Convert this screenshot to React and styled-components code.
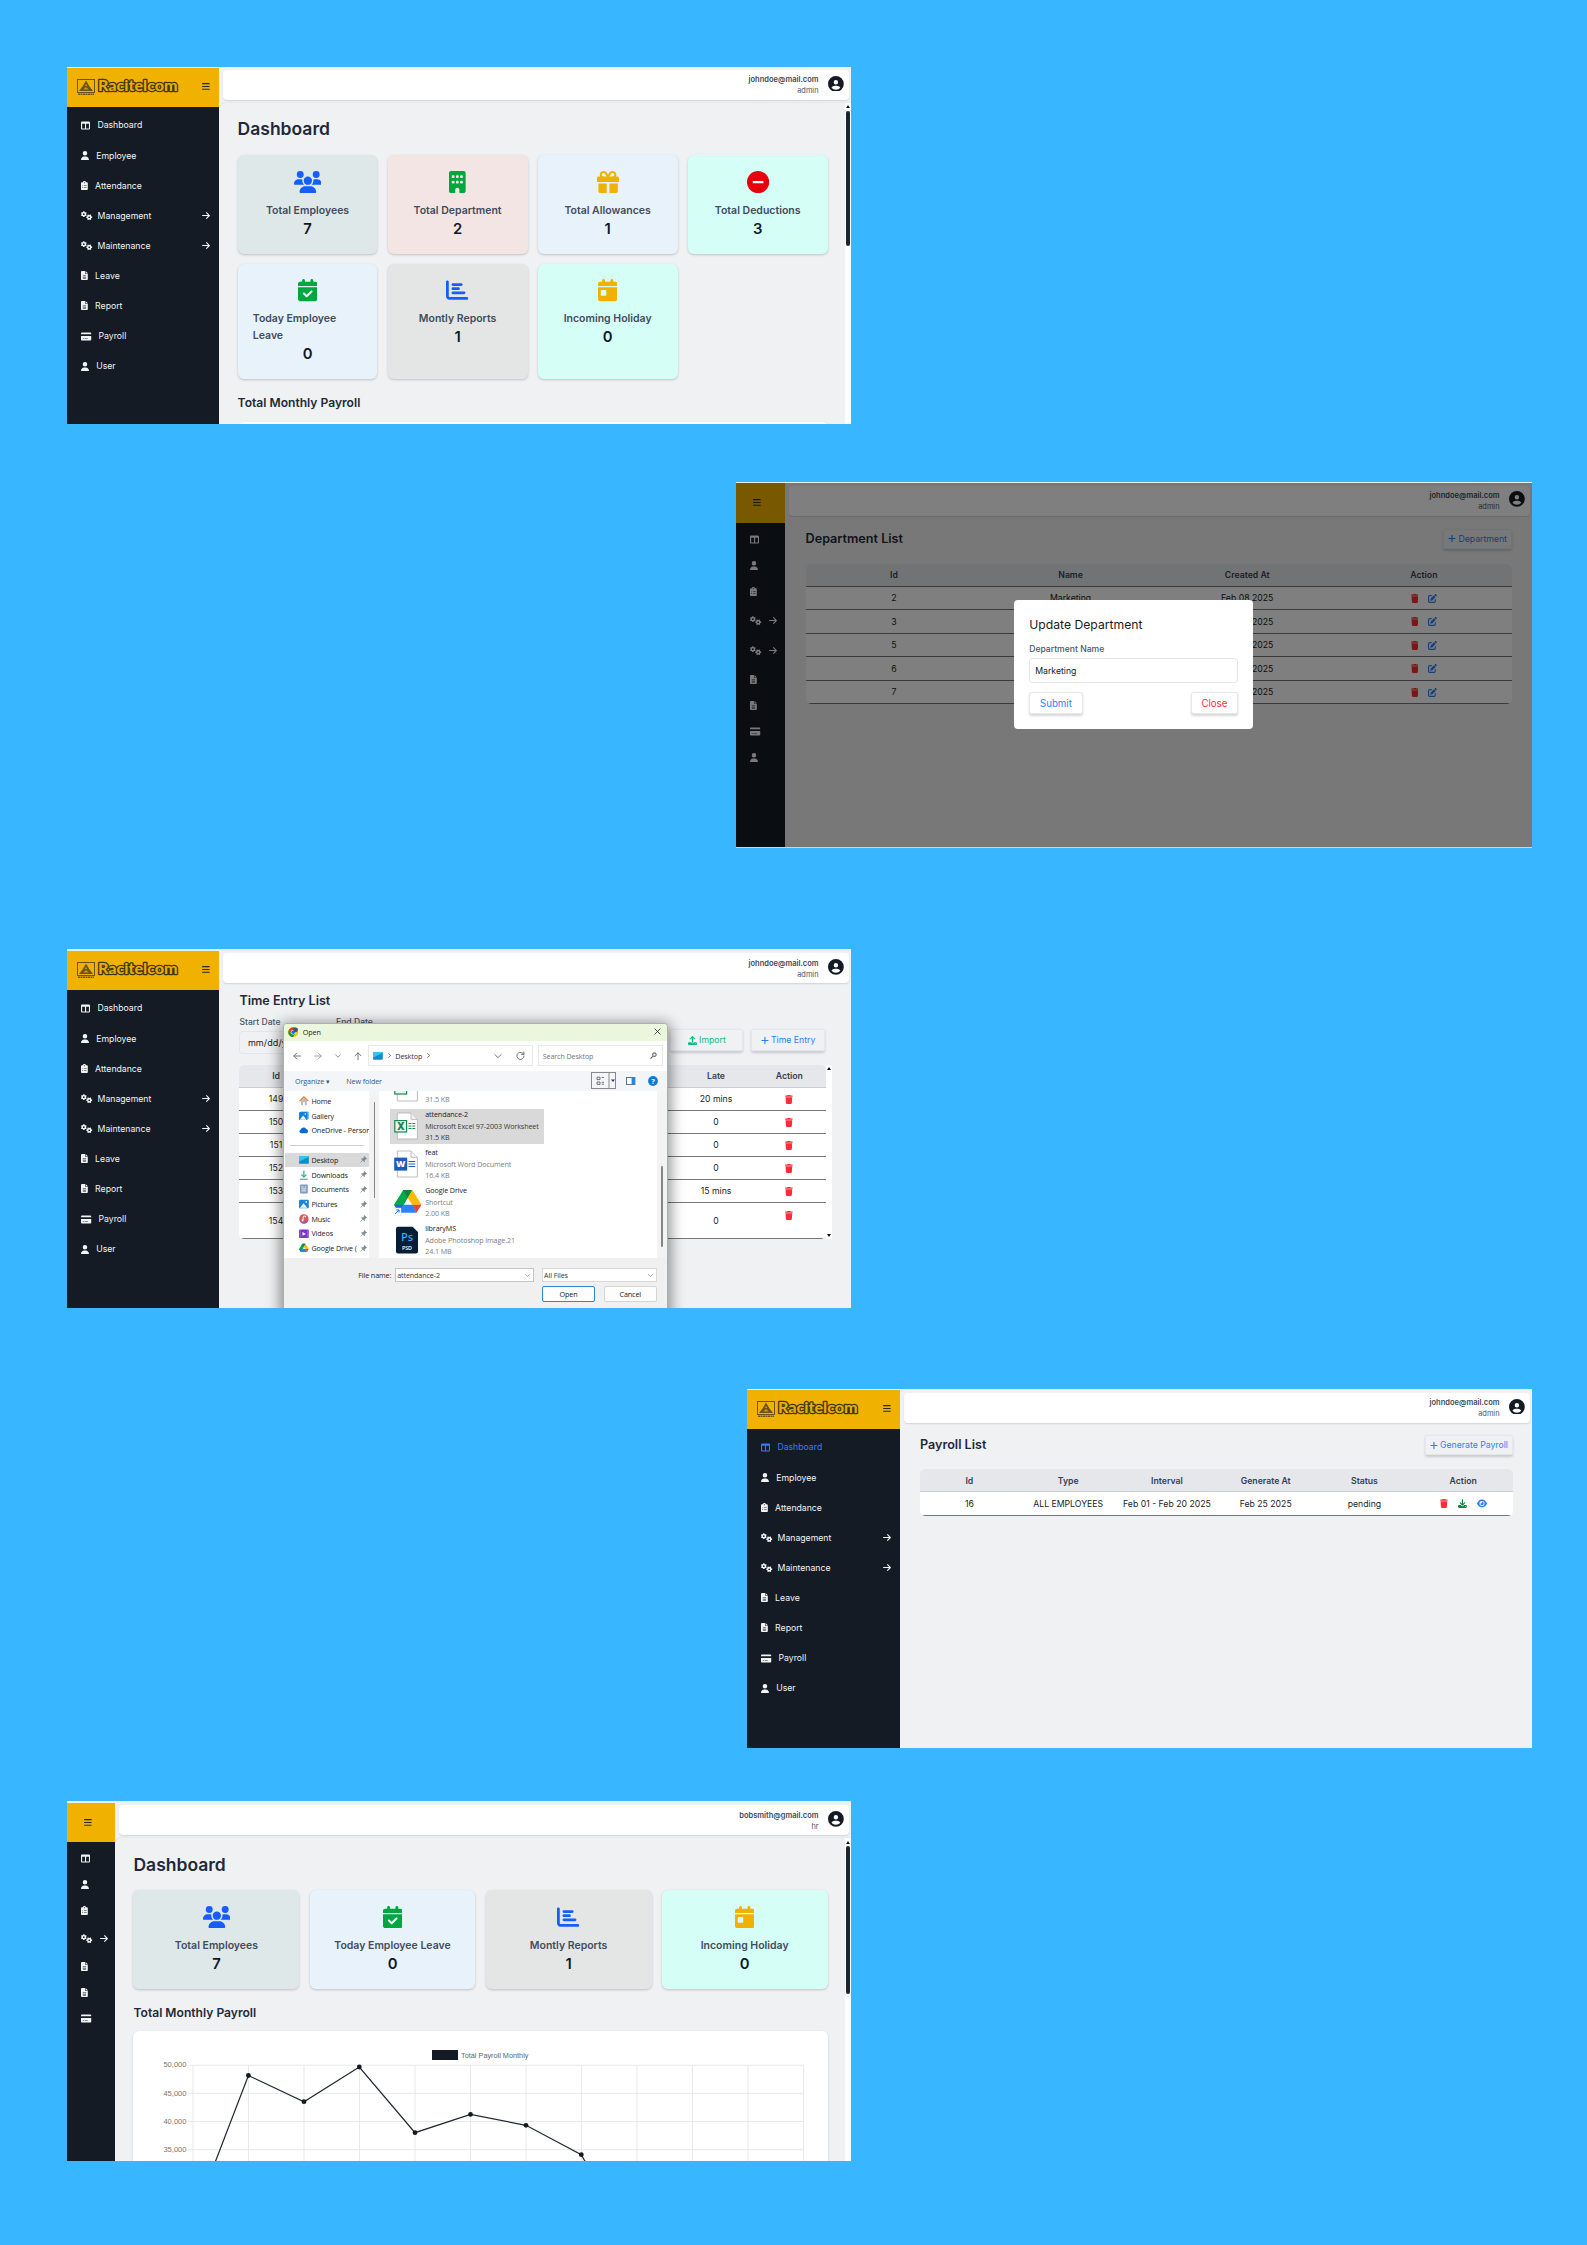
import React from "react";
import styled, { createGlobalStyle, css } from "styled-components";
import * as Fa from "react-icons/fa6";

/* Font Awesome glyphs are 512 units high and vary in width */
const glyph = (Icon, width) => styled(Icon)`aspect-ratio: ${width} / 512;`;
const FaTableColumns = glyph(Fa.FaTableColumns, 512);
const FaUser = glyph(Fa.FaUser, 448);
const FaClipboardList = glyph(Fa.FaClipboardList, 384);
const FaGears = glyph(Fa.FaGears, 640);
const FaFileLines = glyph(Fa.FaFileLines, 384);
const FaCreditCard = glyph(Fa.FaCreditCard, 576);
const FaArrowRight = glyph(Fa.FaArrowRight, 448);
const FaBars = glyph(Fa.FaBars, 448);
const FaUsers = glyph(Fa.FaUsers, 640);
const FaBuilding = glyph(Fa.FaBuilding, 384);
const FaGift = glyph(Fa.FaGift, 512);
const FaCalendarCheck = glyph(Fa.FaCalendarCheck, 448);
const FaChartBar = glyph(Fa.FaChartBar, 512);
const FaCalendarDay = glyph(Fa.FaCalendarDay, 448);
const FaCircleUser = glyph(Fa.FaCircleUser, 512);
const FaTrash = glyph(Fa.FaTrash, 448);
const FaPenToSquare = glyph(Fa.FaPenToSquare, 512);
const FaDownload = glyph(Fa.FaDownload, 512);
const FaUpload = glyph(Fa.FaUpload, 512);
const FaEye = glyph(Fa.FaEye, 576);
const FaPlus = glyph(Fa.FaPlus, 448);
const MinusDisc = () => (
  <svg width="22" height="22" viewBox="0 0 22 22">
    <circle cx="11" cy="11" r="11" fill="currentColor" />
    <rect x="5.7" y="9.8" width="10.6" height="2.4" rx="0.6" fill="#fff" />
  </svg>
);

const GlobalStyle = createGlobalStyle`
  *, *::before, *::after { box-sizing: border-box; }
  body { margin: 0; background: #38b6ff; font-family: Inter, "Liberation Sans", sans-serif; }
  svg { display: block; flex: none; }
`;

const Board = styled.main`
  width: 1587px;
  height: 2245px;
  padding: 67px 55px 0 67px;
  display: flex;
  flex-direction: column;
  align-items: flex-start;
  background: #38b6ff;
  overflow: hidden;
`;

const Screen = styled.section`
  position: relative;
  flex: none;
  width: ${(p) => p.$w}px;
  height: ${(p) => p.$h}px;
  margin-top: ${(p) => p.$gap || 0}px;
  align-self: ${(p) => (p.$right ? "flex-end" : "flex-start")};
  border-top: ${(p) => p.$strip}px solid #e9eff3;
  background: #f0f1f3;
  overflow: hidden;
  display: flex;
`;

/* ---------- sidebar ---------- */
const Side = styled.aside`
  width: ${(p) => p.$w}px;
  flex: none;
  background: #151b24;
  color: #f3f4f6;
`;
const Brand = styled.header`
  height: ${(p) => p.$h || 39}px;
  background: #f0b100;
  color: #2b2a17;
  display: flex;
  align-items: center;
  justify-content: ${(p) => (p.$mini ? "flex-start" : "space-between")};
  padding: ${(p) => (p.$mini ? "0 0 1px 17px" : "0 9.3px 1.2px 10px")};
  & > svg:last-child { height: 8.9px; width: auto; }
`;
const Nav = styled.nav`
  padding-top: 3.4px;
  display: flex;
  flex-direction: column;
`;
const NavItem = styled.a`
  height: ${(p) => p.$h}px;
  padding: 0 9px 0 14.3px;
  display: flex;
  align-items: center;
  gap: ${(p) => (p.$tight ? 4.9 : 7)}px;
  font-size: 8.7px;
  color: ${(p) => (p.$active ? "#2b7fff" : "inherit")};
  & > svg { height: 9.1px; width: auto; }
  & > svg:last-child:not(:first-child) { margin-left: ${(p) => (p.$mini ? "2.6px" : "auto")}; }
`;

const LINKS = [
  ["Dashboard", FaTableColumns], ["Employee", FaUser], ["Attendance", FaClipboardList],
  ["Management", FaGears, true], ["Maintenance", FaGears, true], ["Leave", FaFileLines],
  ["Report", FaFileLines], ["Payroll", FaCreditCard], ["User", FaUser],
];
const HR_LINKS = LINKS.filter(([name]) => name !== "Maintenance" && name !== "User");

function Logo() {
  return (
    <svg width="104" height="18" viewBox="0 0 104 18">
      <g fill="none" stroke="#6e5318" strokeWidth="1">
        <rect x="0.5" y="1.5" width="17" height="13" />
        <path d="M1 16.2h16" strokeWidth="1.4" strokeDasharray="2 .5" />
      </g>
      <path d="M9 2.4 12.2 8 16 13H2L5.8 8Z" fill="#6e5318" />
      <path d="M9 6 10.2 8H7.8ZM9 9l2.6 2.6H6.4Z" fill="#d09a0a" />
      <text x="21" y="13.4" textLength="79.6" lengthAdjust="spacingAndGlyphs" fontFamily="Lato, sans-serif"
        fontWeight="900" fontSize="14.6" fill="#e8ac05" stroke="#3d370d" strokeWidth="2.4" paintOrder="stroke"
        strokeLinejoin="round">Racitelcom</text>
    </svg>
  );
}

function Sidebar({ mini, width, brandHeight, links = LINKS, row = 30.1, wideRow = 30.1, active }) {
  return (
    <Side $w={width}>
      <Brand $mini={mini} $h={brandHeight}>
        {!mini && <Logo />}
        <FaBars />
      </Brand>
      <Nav>
        {links.map(([name, Icon, more]) => (
          <NavItem key={name} $h={more ? wideRow : row} $tight={more} $mini={mini} $active={active === name}>
            <Icon />
            {!mini && name}
            {more && <FaArrowRight />}
          </NavItem>
        ))}
      </Nav>
    </Side>
  );
}

/* ---------- main column ---------- */
const Main = styled.div`
  flex: 1;
  min-width: 0;
  display: flex;
  flex-direction: column;
`;
const TopBar = styled.header`
  flex: none;
  height: 30px;
  margin: ${(p) => p.$mt || 2.3}px 1.7px 0 3.6px;
  padding: 0 5.4px 0 0;
  display: flex;
  justify-content: flex-end;
  align-items: flex-start;
  gap: 9.6px;
  background: #fff;
  border-radius: 4px;
  box-shadow: 0 1px 1.5px rgba(0, 0, 0, 0.12);
  & > svg { width: 15.8px; height: 15.8px; color: #141a23; margin-top: 5.6px; }
`;
const Account = styled.div`
  text-align: right;
  font-size: 7.4px;
  line-height: 11px;
  color: #4a5565;
  padding-top: 4.4px;
  & > strong { display: block; font-weight: 600; font-size: 7.5px; color: #3d4757; }
`;
function Top({ mail = "johndoe@mail.com", role = "admin", mt }) {
  return (
    <TopBar $mt={mt}>
      <Account><strong>{mail}</strong>{role}</Account>
      <FaCircleUser />
    </TopBar>
  );
}

const Scroller = styled.div`
  margin-top: 3px;
  flex: 1;
  min-height: 0;
  display: flex;
  overflow: hidden;
  border-top-left-radius: 6px;
  box-shadow: 0 0 1.5px rgba(0, 0, 0, 0.14);
`;
const Page = styled.div`
  flex: 1;
  min-width: 0;
  padding: 14.3px 17.4px 0 18.3px;
`;
const Track = styled.div`
  width: 6px;
  flex: none;
  background: #fff;
  display: flex;
  flex-direction: column;
  align-items: center;
  justify-content: ${(p) => (p.$ends ? "space-between" : "flex-start")};
  padding: 2.4px 0;
`;
const Caret = styled.i`
  border: 2px solid transparent;
  border-top-width: ${(p) => (p.$down ? 3 : 0)}px;
  border-bottom-width: ${(p) => (p.$down ? 0 : 3)}px;
  border-top-color: ${(p) => (p.$down ? "#111" : "transparent")};
  border-bottom-color: ${(p) => (p.$down ? "transparent" : "#111")};
`;
const Thumb = styled.i`
  width: 4px;
  height: ${(p) => p.$h}px;
  margin-top: 2.6px;
  border-radius: 2px;
  background: #1c2430;
`;

const Heading = styled.h1`
  margin: 0 0 13.8px;
  font-size: 17.5px;
  line-height: 24px;
  font-weight: 600;
  color: #1e2939;
`;
const SubHeading = styled.h2`
  margin: 15.4px 0 10.8px;
  font-size: 12.1px;
  line-height: 16px;
  font-weight: 600;
  color: #1e2939;
`;
const Cards = styled.div`
  display: grid;
  grid-template-columns: repeat(4, 1fr);
  gap: 9.7px 10.2px;
`;
const Card = styled.article`
  min-height: 98.8px;
  padding: 15.8px 15.2px 15px;
  display: flex;
  flex-direction: column;
  align-items: center;
  border-radius: 6px;
  background: ${(p) => p.$bg};
  box-shadow: 0 1px 2.5px rgba(0, 0, 0, 0.2);
  & > svg { height: 22.2px; width: auto; color: ${(p) => p.$fg}; }
`;
const CardLabel = styled.div`
  margin-top: 8.8px;
  font-size: 10.5px;
  line-height: 17px;
  font-weight: 600;
  color: #414c5c;
`;
const CardValue = styled.strong`
  font-size: 14.8px;
  line-height: 20px;
  font-weight: 600;
  color: #101828;
`;
const BLUE = "#155dfc", GREEN = "#00a63e", AMBER = "#f0b100", RED = "#e7000b";
const STATS = {
  employees: ["Total Employees", 7, FaUsers, "#dfe8e8", BLUE],
  department: ["Total Department", 2, FaBuilding, "#f3e5e3", GREEN],
  allowances: ["Total Allowances", 1, FaGift, "#e7f2fb", AMBER],
  deductions: ["Total Deductions", 3, MinusDisc, "#d5fef6", RED],
  leave: ["Today Employee Leave", 0, FaCalendarCheck, "#e7f2fb", GREEN],
  reports: ["Montly Reports", 1, FaChartBar, "#e4e6e5", BLUE],
  holiday: ["Incoming Holiday", 0, FaCalendarDay, "#d5fef6", AMBER],
};
function StatCards({ keys }) {
  return (
    <Cards>
      {keys.map((k) => {
        const [label, value, Icon, bg, fg] = STATS[k];
        return (
          <Card key={k} $bg={bg} $fg={fg}>
            <Icon />
            <CardLabel>{label}</CardLabel>
            <CardValue>{value}</CardValue>
          </Card>
        );
      })}
    </Cards>
  );
}

/* ---------- chart ---------- */
const ChartCard = styled.div`
  height: 200px;
  padding: 18.8px 0 0 28px;
  border-radius: 6px;
  background: #fff;
  box-shadow: 0 1px 2.5px rgba(0, 0, 0, 0.16);
`;
const Legend = styled.div`
  display: flex;
  align-items: center;
  justify-content: center;
  gap: 3.4px;
  margin-left: -29px;
  height: 10px;
  font: 7.3px "Liberation Sans", sans-serif;
  color: #666;
  &::before { content: ""; width: 26px; height: 9.5px; background: #141a23; }
`;
const POINTS = [[0, 155], [55.4, 10.5], [111, 36.7], [166.3, 2], [222, 67.7], [277.5, 49.4], [333, 60.3], [388.3, 89.7], [444, 190]];
function PayrollChart() {
  return (
    <ChartCard>
      <Legend>Total Payroll Monthly</Legend>
      <svg width="660" height="140" viewBox="-32 -5 660 140">
        <g stroke="#e6e6e6" strokeWidth="0.9">
          {[0, 1, 2, 3, 4].map((i) => <path key={i} d={`M-5 ${i * 28.15 + 0.2}H610.5`} />)}
          {Array.from({ length: 12 }, (_, i) => <path key={i} d={`M${i * 55.5} 0V130`} />)}
        </g>
        <g fontFamily='"Liberation Sans", sans-serif' fontSize="7.5" fill="#747474" textAnchor="end">
          {["50,000", "45,000", "40,000", "35,000"].map((t, i) => <text key={t} x="-6.6" y={i * 28.15 + 2.4}>{t}</text>)}
        </g>
        <polyline points={POINTS.map((p) => p.join()).join(" ")} fill="none" stroke="#222932" strokeWidth="1.25" />
        {POINTS.map(([x, y]) => <circle key={x} cx={x} cy={y} r="2.4" fill="#141a23" />)}
      </svg>
    </ChartCard>
  );
}

/* ---------- list pages ---------- */
const ListPage = styled.div`
  flex: 1;
  padding: ${(p) => p.$pad};
`;
const ListHead = styled.div`
  display: flex;
  justify-content: space-between;
  align-items: center;
  margin-bottom: ${(p) => p.$mb}px;
`;
const ListTitle = styled.h2`
  margin: 0;
  font-size: 12.6px;
  line-height: 16px;
  font-weight: 600;
  color: #1e2939;
`;
const TONES = { blue: "#2b7fff", green: "#10b981", red: "#fb2c36" };
const Button = styled.button`
  height: ${(p) => p.$h || 19.6}px;
  width: ${(p) => (p.$w ? p.$w + "px" : "auto")};
  padding: 0 5px;
  display: flex;
  align-items: center;
  justify-content: center;
  gap: 2.4px;
  font: 400 ${(p) => p.$size || 8.7}px Inter, sans-serif;
  white-space: nowrap;
  color: ${(p) => TONES[p.$tone || "blue"]};
  background: ${(p) => (p.$solid ? "#fff" : "transparent")};
  border: 1px solid #e5e7eb;
  border-radius: 2.5px;
  box-shadow: 0 1.5px 2.5px rgba(0, 0, 0, 0.16);
  & > svg { height: 9px; width: auto; }
`;
const Table = styled.div`
  flex: 1;
  border-radius: 5px;
  overflow: hidden;
  background: #fff;
  font-size: 8.7px;
  color: #1c1c1c;
`;
const Row = styled.div`
  display: grid;
  grid-template-columns: repeat(${(p) => p.$cols}, 1fr);
  align-items: center;
  height: ${(p) => p.$h || 23.55}px;
  padding-top: 0.8px;
  text-align: center;
  white-space: nowrap;
  border-bottom: 1px solid #777;
  ${(p) => p.$head && css`
    background: #e5e7eb;
    color: #364153;
    font-weight: 600;
    border-bottom: 1.5px solid ${p.$line || "#c8ccd3"};
  `}
`;
const Actions = styled.div`
  display: flex;
  justify-content: center;
  align-items: center;
  gap: 10px;
  margin-bottom: ${(p) => p.$lift || 0}px;
  & > svg { height: 8.9px; width: auto; }
`;

/* ---------- modal ---------- */
const Overlay = styled.div`
  position: absolute;
  inset: -1px 0 0 0;
  background: rgba(0, 0, 0, 0.5);
  border-bottom: 1.5px solid #d9d4cf;
`;
const Modal = styled.div`
  position: absolute;
  left: 278.2px;
  top: 117px;
  width: 239px;
  height: 129px;
  padding: 16.8px 15px 0;
  border-radius: 4px;
  background: #fff;
`;
const ModalTitle = styled.h3`
  margin: 0;
  font-size: 12.2px;
  line-height: 16px;
  font-weight: 400;
  color: #1a1a1a;
`;
const FieldLabel = styled.label`
  display: block;
  margin-top: ${(p) => p.$mt || 0}px;
  font-size: 8.6px;
  line-height: 11px;
  font-weight: 500;
  color: #4a5565;
`;
const Input = styled.div`
  margin-top: 3.2px;
  width: ${(p) => (p.$w ? p.$w + "px" : "auto")};
  height: ${(p) => p.$h || 24.5}px;
  padding: 0 ${(p) => p.$pad || 5}px;
  display: flex;
  align-items: center;
  white-space: nowrap;
  font-size: ${(p) => p.$size || 8.7}px;
  color: #1a1a1a;
  border: 1px solid #e2e5ea;
  border-radius: 3.5px;
  letter-spacing: ${(p) => p.$track || 0}px;
`;
const ModalFoot = styled.div`
  margin-top: 9.5px;
  display: flex;
  justify-content: space-between;
`;

/* ---------- time entry filters ---------- */
const Filters = styled.div`
  display: flex;
  align-items: flex-end;
  gap: 8px;
  margin: 8.2px 7.3px 11.4px 0;
`;
const Field = styled.div`
  width: ${(p) => p.$w}px;
  margin-right: ${(p) => (p.$last ? "auto" : 0)};
`;
const FilterButton = styled(Button)`margin-bottom: 2.3px;`;
const TableWrap = styled.div`display: flex;`;

/* ---------- file dialog ---------- */
const Dialog = styled.div`
  position: absolute;
  left: 216px;
  top: 71.8px;
  width: 385px;
  height: 300px;
  display: flex;
  flex-direction: column;
  border: 1px solid #aab0ab;
  border-radius: 4px 4px 0 0;
  background: #f0f0f0;
  box-shadow: 0 3px 14px 3px rgba(0, 0, 0, 0.42);
  overflow: hidden;
  font-family: "Open Sans", "Noto Sans", sans-serif;
  font-size: 7.2px;
  letter-spacing: -0.12px;
  color: #222;
`;
const DialogTitle = styled.div`
  flex: none;
  height: 17px;
  padding: 0 6px 1px 4.4px;
  display: flex;
  align-items: center;
  gap: 4px;
  background: #ebf7dc;
  & > svg:last-child { margin-left: auto; }
`;
const AddressRow = styled.div`
  flex: none;
  height: 30px;
  padding: 0 4px 0 8.8px;
  display: flex;
  align-items: center;
  background: #fff;
`;
const Arrows = styled.div`
  width: 75.5px;
  display: flex;
  align-items: center;
  gap: 13.2px;
`;
const Box = styled.div`
  width: ${(p) => p.$w}px;
  height: ${(p) => p.$h || 21}px;
  margin-left: ${(p) => p.$ml || 0}px;
  padding: 0 ${(p) => p.$pr || 4}px 0 ${(p) => p.$pl || 4}px;
  display: flex;
  align-items: center;
  gap: ${(p) => p.$gap || 4}px;
  color: ${(p) => (p.$muted ? "#767676" : "#333")};
  background: #fff;
  border: 1px solid ${(p) => p.$line || "#e8e8e8"};
  & > svg:last-child { margin-left: ${(p) => (p.$push ? "auto" : "0")}; }
`;
const BoxTools = styled.span`
  margin-left: auto;
  display: flex;
  align-items: center;
  gap: 14.6px;
`;
const ToolRow = styled.div`
  flex: none;
  height: 20.5px;
  padding: 0 8.8px 0.6px 11px;
  display: flex;
  align-items: center;
  background: #f3f5f8;
  color: #3d5876;
  & > span { margin-right: 16.6px; }
`;
const ViewButton = styled.div`
  margin: 0 9.6px 0 auto;
  width: 25.6px;
  height: 17px;
  display: flex;
  align-items: center;
  border: 1px solid #888;
`;
const DialogBody = styled.div`
  flex: none;
  height: 166.6px;
  display: flex;
`;
const Tree = styled.div`
  width: 85px;
  flex: none;
  padding: 2.2px 0 0 1px;
  background: #fff;
`;
const TreeItem = styled.div`
  height: 14.73px;
  padding: 0 ${(p) => (p.$wide ? 0 : 2)}px 0 14.2px;
  display: flex;
  align-items: center;
  gap: 2.4px;
  white-space: nowrap;
  background: ${(p) => (p.$on ? "#d9d9d9" : "transparent")};
  & > span { flex: 1; min-width: 0; overflow: hidden; }
`;
const TreeRule = styled.hr`
  margin: 6.9px 5px 7px 5px;
  border: 0;
  border-top: 1px solid #cfcfcf;
`;
const Gutter = styled.div`
  width: 10px;
  flex: none;
  padding: ${(p) => p.$top}px 0 0 ${(p) => p.$left}px;
  background: #f3f3f3;
  &::before { content: ""; display: block; width: 1.8px; height: ${(p) => p.$h}px; border-radius: 1px; background: #858585; }
`;
const Files = styled.div`
  flex: 1;
  min-width: 0;
  padding-left: 10.9px;
  background: #fff;
  overflow: hidden;
  display: flex;
  flex-direction: column;
  justify-content: flex-end;
  align-items: flex-start;
  gap: 2.7px;
`;
const File = styled.div`
  flex: none;
  width: 154px;
  height: 35.3px;
  padding-left: 4px;
  display: flex;
  align-items: center;
  gap: 4.3px;
  line-height: 11.2px;
  white-space: nowrap;
  background: ${(p) => (p.$on ? "#d9d9d9" : "transparent")};
  color: ${(p) => (p.$on ? "#3a3a3a" : "#808080")};
  & b { display: block; font-weight: 400; color: #222; }
`;
const LastLine = styled.div`
  align-self: flex-end;
  padding-bottom: 0.9px;
`;
const DialogFoot = styled.div`
  padding: 10.6px 10px 0 0;
  display: flex;
  align-items: center;
  justify-content: flex-end;
`;
const FootButtons = styled.div`
  display: flex;
  justify-content: flex-end;
  gap: 8.4px;
  padding: 3.8px 10px 0 0;
`;
const DialogButton = styled.button`
  width: 53.4px;
  height: 15.7px;
  padding: 0;
  font: inherit;
  letter-spacing: inherit;
  color: #222;
  background: #fdfdfd;
  border: 1px solid ${(p) => (p.$primary ? "#2f86cf" : "#d4d4d4")};
  border-radius: 2px;
`;

const Stroke = ({ d, w = 8, c = "#666", sw = 0.9 }) => (
  <svg width={w} height={w} viewBox="0 0 8 8"><path d={d} fill="none" stroke={c} strokeWidth={sw} strokeLinecap="round" strokeLinejoin="round" /></svg>
);
const Chev = () => <Stroke w={5} d="M2.5 1 6 4 2.5 7" sw={1.3} />;
const Down = ({ w = 7 }) => <Stroke w={w} d="M.8 2.5 4 5.6 7.2 2.5" />;
const Pin = () => (
  <svg width="7" height="7" viewBox="0 0 8 8"><path d="M5 .5 7.5 3l-1 .3L5 5l0 1.5L1.7 3.2h1.5L4.8 1.6ZM3.3 4.7.6 7.4" fill="#7d8992" stroke="#7d8992" strokeWidth=".8" /></svg>
);
const DriveMark = ({ size, x = 0, y = 0 }) => (
  <svg x={x} y={y} width={size} height={size} viewBox="0 0 24 24">
    <path d="M8 2h8l-4 7-7.4 13L0 15Z" fill="#00a94b" />
    <path d="M8 2h8l-4 7Z" fill="#11833a" />
    <path d="M16 2 24 15h-8l-4-6Z" fill="#ffba00" />
    <path d="M4.6 22 8.3 15h8l3.4 7Z" fill="#2684fc" />
    <path d="M16 15h8l-4.4 7Z" fill="#ea4335" />
    <path d="M4.6 22 0 15l8.3 0Z" fill="#1a6de0" />
  </svg>
);
const TREE_ICONS = {
  Home: <><path d="M2 4.6V9.5H4V6.4H6V9.5H8V4.6L5 2Z" fill="#b9bec4" /><path d="M.5 5.2 5 1 9.5 5.2" fill="none" stroke="#ec7a24" strokeWidth="1.3" /></>,
  Gallery: <><rect x="1.5" y=".5" width="8.5" height="8" rx="1" fill="#5db6ee" /><rect y="1" width="8.5" height="8.5" rx="1" fill="#1480d8" /><path d="M.8 9 4.2 4.5 7.6 9Z" fill="#fff" /><circle cx="6.4" cy="3" r=".8" fill="#fff" /></>,
  OneDrive: <path d="M2 8.4A2 2 0 0 1 1.8 4.6 3.2 3.2 0 0 1 7.4 4a2.3 2.3 0 0 1 .4 4.4Z" fill="#0a6cd0" />,
  Desktop: <><rect y="1" width="10" height="8" rx=".8" fill="#0c8ecb" /><path d="M0 7V1.8Q0 1 .8 1H9.2Q10 1 10 1.8Z" fill="#35c5e6" /></>,
  Downloads: <path d="M5 .5V7M2.4 4.6 5 7.2 7.6 4.6M1 9.4h8" fill="none" stroke="#1fa58c" strokeWidth="1.1" />,
  Documents: <><rect x="1" y=".4" width="8" height="9.2" rx=".8" fill="#7e9cbf" /><path d="M2.4 3h2.2M2.4 5h5M2.4 7h5M5.8 3h1.6" stroke="#fff" strokeWidth=".9" /></>,
  Pictures: <><rect y=".7" width="10" height="8.8" rx="1" fill="#1785dc" /><path d="M1 9 4.6 4.4 8.4 9Z" fill="#fff" /><circle cx="7.4" cy="3" r=".9" fill="#fff" /></>,
  Music: <><circle cx="5" cy="5" r="4.8" fill="#d0605e" /><path d="M.6 7A4.8 4.8 0 0 0 9.6 6.4Z" fill="#a65a9a" /><path d="M4.2 6.6V2.6L6.6 2v1.4" fill="none" stroke="#fff" strokeWidth=".9" /><circle cx="3.6" cy="6.6" r="1" fill="#fff" /></>,
  Videos: <><rect y=".6" width="10" height="9" rx="1" fill="#7a35c8" /><path d="M3.6 3v4L7 5Z" fill="#fff" /><path d="M1.1 1.6V9M8.9 1.6V9" stroke="#d9bdf7" strokeWidth=".8" strokeDasharray="1 1" /></>,
  "Google Drive (": <DriveMark size={10} />,
};
const TreeIcon = ({ name }) => <svg width="9.8" height="9.8" viewBox="0 0 10 10">{TREE_ICONS[name]}</svg>;

const Sheet = ({ color, letter, excel }) => (
  <svg width="27" height="28" viewBox="0 0 27 28">
    <path d="M3.3 1H17l6.4 6.4V27H3.3Z" fill="#fff" stroke="#b5b5b5" strokeWidth=".9" />
    <path d="M17 1v6.4h6.4" fill="#f2f2f2" stroke="#b5b5b5" strokeWidth=".8" />
    <path d="M14.5 11.5h6.8M14.5 14h6.8M14.5 16.5h6.8" stroke={color} strokeWidth="1" strokeDasharray={excel ? "3 .8" : "none"} />
    {excel
      ? <rect x=".8" y="8.6" width="11.8" height="11.4" fill="#e9f5ee" stroke={color} strokeWidth="1.2" />
      : <rect x=".2" y="7.6" width="13" height="13" fill={color} />}
    {letter && (
      <text x="6.7" y={excel ? 17.8 : 17.4} fontSize={excel ? 10 : 9} fontWeight="800" textAnchor="middle"
        fill={excel ? color : "#fff"} fontFamily="Open Sans, sans-serif">{letter}</text>
    )}
  </svg>
);
const DriveFile = () => (
  <svg width="27" height="28" viewBox="0 0 27 28">
    <DriveMark size={27.5} y={-0.4} />
    <rect x="-1" y="20" width="8" height="8" fill="#fff" stroke="#b9cde0" strokeWidth=".5" />
    <path d="M1 26 5 22M2.4 22H5v2.6" fill="none" stroke="#1b74c9" strokeWidth="1" />
  </svg>
);
const PsdFile = () => (
  <svg width="27" height="28" viewBox="0 0 27 28">
    <path d="M4 .8H18.6L24 6V25.6a2 2 0 0 1-2 2H4a2 2 0 0 1-2-2V2.8a2 2 0 0 1 2-2Z" fill="#041e36" />
    <text x="13" y="14.6" fontSize="11" fontWeight="600" textAnchor="middle" fill="#31a8ff" fontFamily="Open Sans, sans-serif">Ps</text>
    <text x="13" y="24.2" fontSize="5.4" fontWeight="600" textAnchor="middle" fill="#fff" fontFamily="Open Sans, sans-serif">PSD</text>
  </svg>
);
const ChromeMark = () => (
  <svg width="10.4" height="10.4" viewBox="0 0 20 20">
    <circle cx="10" cy="10" r="9.6" fill="#fbc116" />
    <path d="M10 .4A9.6 9.6 0 0 0 1.7 5.2L6 12.5 10 10V5.5h8.3A9.6 9.6 0 0 0 10 .4Z" fill="#e33b2e" />
    <path d="M1.7 5.2A9.6 9.6 0 0 0 9.6 19.6l4.2-7.2L10 10 6 12.4Z" fill="#229342" />
    <circle cx="10" cy="10" r="4.4" fill="#fff" /><circle cx="10" cy="10" r="3.5" fill="#1a73e8" />
    <circle cx="14.6" cy="5.4" r="4.6" fill="#40546a" />
  </svg>
);

function OpenDialog() {
  return (
    <Dialog>
      <DialogTitle><ChromeMark />Open<Stroke w={7} c="#222" d="M1 1 7 7M7 1 1 7" /></DialogTitle>
      <AddressRow>
        <Arrows>
          <Stroke d="M7.5 4H.8M3.8 1 .8 4l3 3" />
          <Stroke c="#999" d="M.5 4h6.7M4.2 1l3 3-3 3" />
          <Down w={6} />
          <Stroke d="M4 7.6V.8M1 3.8l3-3 3 3" />
        </Arrows>
        <Box $w={164.4} $pr={6.6} $gap={3.6}>
          <TreeIcon name="Desktop" /><Chev />Desktop<Chev />
          <BoxTools>
            <Down w={8} />
            <Stroke w={9} d="M6.9 3A3.2 3.2 0 1 0 7.2 4.4M7 .8V3H4.9" sw={0.8} />
          </BoxTools>
        </Box>
        <Box $w={125} $ml={5} $pr={5} $muted $push>Search Desktop<Stroke w={7} d="M3.4 4.6.8 7.2M5 1a2 2 0 1 1 0 4 2 2 0 0 1 0-4" sw={1.2} /></Box>
      </AddressRow>
      <ToolRow>
        <span>Organize ▾</span>
        <span>New folder</span>
        <ViewButton>
          <svg width="25" height="15" viewBox="0 0 25 15"><path d="M17 0V15" stroke="#888" /><path d="M5 4.2h3v2.4H5ZM5 9h3v2.4H5ZM9.6 4.5H12M9.6 9.3H12M9.6 11.2H12" fill="none" stroke="#555" strokeWidth=".8" /><path d="M19 6.4h4L21 9Z" fill="#1a3c6e" /></svg>
        </ViewButton>
        <svg width="22.3" height="8" viewBox="0 0 22.3 8"><rect x=".5" y=".5" width="8.4" height="7" fill="#fff" stroke="#4b6a86" strokeWidth=".9" /><path d="M5.6 .5h3.3v7H5.6Z" fill="#1b8ae0" /></svg>
        <svg width="10" height="10" viewBox="0 0 10 10"><circle cx="5" cy="5" r="4.9" fill="#0a7bd8" /><text x="5" y="7.7" fontSize="7.6" fontWeight="700" fill="#fff" textAnchor="middle" fontFamily="Open Sans, sans-serif">?</text></svg>
      </ToolRow>
      <DialogBody>
        <Tree>
          <TreeItem><TreeIcon name="Home" /><span>Home</span></TreeItem>
          <TreeItem><TreeIcon name="Gallery" /><span>Gallery</span></TreeItem>
          <TreeItem $wide><TreeIcon name="OneDrive" /><span>OneDrive - Person</span></TreeItem>
          <TreeRule />
          {["Desktop", "Downloads", "Documents", "Pictures", "Music", "Videos", "Google Drive ("].map((n) => (
            <TreeItem key={n} $on={n === "Desktop"}><TreeIcon name={n} /><span>{n}</span><Pin /></TreeItem>
          ))}
        </Tree>
        <Gutter $top={10.4} $left={4.6} $h={96.5} />
        <Files>
          <File><Sheet color="#18884f" excel /><LastLine>31.5 KB</LastLine></File>
          <File $on><Sheet color="#18884f" letter="X" excel /><div><b>attendance-2</b>Microsoft Excel 97-2003 Worksheet<br />31.5 KB</div></File>
          <File><Sheet color="#1b5cbe" letter="W" /><div><b>feat</b>Microsoft Word Document<br />16.4 KB</div></File>
          <File><DriveFile /><div><b>Google Drive</b>Shortcut<br />2.00 KB</div></File>
          <File><PsdFile /><div><b>libraryMS</b>Adobe Photoshop Image.21<br />24.1 MB</div></File>
        </Files>
        <Gutter $top={75} $left={4} $h={81} />
      </DialogBody>
      <DialogFoot>
        File name:
        <Box $w={139.4} $h={13.7} $ml={3.4} $pl={1.5} $pr={3} $line="#c4c4c4" $push>attendance-2<Down w={5} /></Box>
        <Box $w={115.4} $h={13.7} $ml={7.6} $pl={1.5} $pr={3} $line="#d8d8d8" $push>All Files<Down w={5} /></Box>
      </DialogFoot>
      <FootButtons>
        <DialogButton $primary>Open</DialogButton>
        <DialogButton>Cancel</DialogButton>
      </FootButtons>
    </Dialog>
  );
}

/* ---------- screens ---------- */
const Bin = () => <FaTrash color="#fb2c36" />;
const DEPARTMENTS = [[2, "Marketing", "Feb 08 2025"], [3, "", "2025"], [5, "", "2025"], [6, "", "2025"], [7, "", "2025"]];
const Tail = styled.span`padding-left: ${(p) => (p.$partial ? 31 : 0)}px;`;
const ENTRIES = [[149, "20 mins"], [150, "0"], [151, "0"], [152, "0"], [153, "15 mins"], [154, "0"]];
const Hidden = styled.span`grid-column: span 5;`;

export default function App() {
  return (
    <>
      <GlobalStyle />
      <Board>
        <Screen $w={784} $h={357} $strip={1}>
          <Sidebar width={152.3} />
          <Main>
            <Top mt={2} />
            <Scroller>
              <Page>
                <Heading>Dashboard</Heading>
                <StatCards keys={["employees", "department", "allowances", "deductions", "leave", "reports", "holiday"]} />
                <SubHeading>Total Monthly Payroll</SubHeading>
                <ChartCard />
              </Page>
              <Track><Caret /><Thumb $h={135.5} /></Track>
            </Scroller>
          </Main>
        </Screen>

        <Screen $w={796} $h={366} $gap={58} $right $strip={1}>
          <Sidebar mini width={49} brandHeight={40} row={26.2} wideRow={30.6} />
          <Main>
            <Top mt={2.7} />
            <ListPage $pad="13.5px 19.8px 0 20.6px">
              <ListHead $mb={14.8}>
                <ListTitle>Department List</ListTitle>
                <Button $w={69.4}><FaPlus />Department</Button>
              </ListHead>
              <Table>
                <Row $head $cols={4} $h={23} $line="#777"><span>Id</span><span>Name</span><span>Created At</span><span>Action</span></Row>
                {DEPARTMENTS.map(([id, name, date]) => (
                  <Row key={id} $cols={4}>
                    <span>{id}</span><span>{name}</span><Tail $partial={!name}>{date}</Tail>
                    <Actions><Bin /><FaPenToSquare color="#2b7fff" /></Actions>
                  </Row>
                ))}
              </Table>
            </ListPage>
          </Main>
          <Overlay />
          <Modal>
            <ModalTitle>Update Department</ModalTitle>
            <FieldLabel $mt={11.4}>Department Name</FieldLabel>
            <Input>Marketing</Input>
            <ModalFoot>
              <Button $solid $w={53.4} $h={22} $size={9.7}>Submit</Button>
              <Button $solid $w={47.6} $h={22} $size={9.7} $tone="red">Close</Button>
            </ModalFoot>
          </Modal>
        </Screen>

        <Screen $w={784} $h={359} $gap={101} $strip={2}>
          <Sidebar width={152} />
          <Main>
            <Top />
            <ListPage $pad="9.6px 19px 0 20.4px">
              <ListTitle>Time Entry List</ListTitle>
              <Filters>
                <Field $w={88.6}><FieldLabel>Start Date</FieldLabel><Input $h={22.4} $pad={7.5} $size={9} $track={0.1}>mm/dd/yyyy</Input></Field>
                <Field $w={88.6} $last><FieldLabel>End Date</FieldLabel><Input $h={22.4} $pad={7.5} $size={9} $track={0.1}>mm/dd/yyyy</Input></Field>
                <FilterButton $w={73.3} $h={22.6} $tone="green"><FaUpload />Import</FilterButton>
                <FilterButton $w={73.3} $h={22.6}><FaPlus />Time Entry</FilterButton>
              </Filters>
              <TableWrap>
                <Table>
                  <Row $head $cols={8} $h={22.7}><span>Id</span><Hidden /><span>Late</span><span>Action</span></Row>
                  {ENTRIES.map(([id, late], i) => (
                    <Row key={id} $cols={8} $h={i === 5 ? 36.4 : 23.05}>
                      <span>{id}</span><Hidden /><span>{late}</span>
                      <Actions $lift={i === 5 ? 12 : 0}><Bin /></Actions>
                    </Row>
                  ))}
                </Table>
                <Track $ends><Caret /><Caret $down /></Track>
              </TableWrap>
            </ListPage>
          </Main>
          <OpenDialog />
        </Screen>

        <Screen $w={785} $h={359} $gap={81} $right $strip={1}>
          <Sidebar width={153} active="Dashboard" />
          <Main>
            <Top mt={3} />
            <ListPage $pad="12.3px 19.4px 0 20px">
              <ListHead $mb={14.4}>
                <ListTitle>Payroll List</ListTitle>
                <Button $w={87.6}><FaPlus />Generate Payroll</Button>
              </ListHead>
              <Table>
                <Row $head $cols={6} $h={23}>
                  {["Id", "Type", "Interval", "Generate At", "Status", "Action"].map((t) => <span key={t}>{t}</span>)}
                </Row>
                <Row $cols={6} $h={23.4}>
                  <span>16</span><span>ALL EMPLOYEES</span><span>Feb 01 - Feb 20 2025</span><span>Feb 25 2025</span><span>pending</span>
                  <Actions><Bin /><FaDownload color="#0b8a3e" /><FaEye color="#2b7fff" /></Actions>
                </Row>
              </Table>
            </ListPage>
          </Main>
        </Screen>

        <Screen $w={784} $h={360} $gap={53} $strip={2}>
          <Sidebar mini width={48.2} row={26} wideRow={29.8} links={HR_LINKS} />
          <Main>
            <Top mail="bobsmith@gmail.com" role="hr" />
            <Scroller>
              <Page>
                <Heading>Dashboard</Heading>
                <StatCards keys={["employees", "leave", "reports", "holiday"]} />
                <SubHeading>Total Monthly Payroll</SubHeading>
                <PayrollChart />
              </Page>
              <Track><Caret /><Thumb $h={148} /></Track>
            </Scroller>
          </Main>
        </Screen>
      </Board>
    </>
  );
}
